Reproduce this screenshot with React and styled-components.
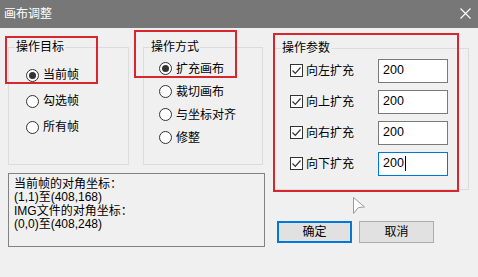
import React from "react";
import styled, { createGlobalStyle } from "styled-components";

const Global = createGlobalStyle`
  html, body { margin: 0; padding: 0; background: #f0f0f0; }
  * { box-sizing: border-box; }
`;

const FONT = `"Liberation Sans", "Noto Sans CJK SC", sans-serif`;

const Window = styled.div`
  position: relative;
  width: 478px;
  height: 277px;
  overflow: hidden;
  background: #f0f0f0;
  font-family: ${FONT};
  font-size: 12px;
  color: #000;
`;

const TitleBar = styled.div`
  height: 28px;
  background: #777777;
  color: #fff;
  display: flex;
  align-items: center;
  justify-content: space-between;
  padding: 0 7px 1px 4px;
  font-size: 12px;
  line-height: 14px;
`;

const Body = styled.div`
  display: grid;
  grid-template-columns: 257px 195px;
  column-gap: 9px;
  padding: 12px 9px 0 8px;
`;

const LeftCol = styled.div`
  display: flex;
  flex-direction: column;
`;

const RightCol = styled.div`
  display: flex;
  flex-direction: column;
`;

const GroupRow = styled.div`
  display: flex;
  gap: 14px;
`;

const Group = styled.fieldset`
  margin: ${(p) => p.$top || 0}px 0 0 0;
  padding: 0;
  border: 1px solid #dcdcdc;
  min-width: 0;
  width: ${(p) => p.$w}px;
  height: ${(p) => p.$h}px;
`;

const Legend = styled.legend`
  margin-left: 6px;
  padding: 0 1px;
  font-size: 12px;
  line-height: 14px;
`;

const OptionList = styled.div`
  display: flex;
  flex-direction: column;
  padding: ${(p) => p.$pt}px 0 0 ${(p) => p.$pl}px;
`;

const OptionRow = styled.label`
  display: flex;
  align-items: center;
  height: ${(p) => p.$h}px;
  gap: ${(p) => p.$gap ?? 4}px;
  line-height: 14px;
`;

const RadioCircle = styled.span`
  width: 13px;
  height: 13px;
  border-radius: 50%;
  border: 1px solid #333;
  background: #fff;
  display: flex;
  align-items: center;
  justify-content: center;
  flex: none;
  &::after {
    content: "";
    width: 7px;
    height: 7px;
    border-radius: 50%;
    background: ${(p) => (p.$on ? "#333" : "transparent")};
  }
`;

const CheckBox = styled.span`
  width: 13px;
  height: 13px;
  border: 1px solid #333;
  background: #fff;
  display: flex;
  align-items: center;
  justify-content: center;
  flex: none;
`;

const ParamLabel = styled.span`
  display: flex;
  align-items: center;
  gap: 3px;
  width: 88px;
`;

const NumInput = styled.div`
  width: 70px;
  height: 24px;
  border: 1px solid ${(p) => (p.$focus ? "#0078d7" : "#7a7a7a")};
  background: #fff;
  padding: 3px 0 0 4px;
  font-size: 12.5px;
  line-height: 15px;
  display: flex;
  align-items: flex-start;
`;

const Caret = styled.span`
  display: inline-block;
  width: 1px;
  height: 15px;
  background: #000;
  margin-left: 1px;
`;

const InfoBox = styled.div`
  margin-top: 8px;
  height: 74px;
  border: 1px solid #828282;
  padding: 4px 5px;
  font-size: 12px;
  line-height: 13.3px;
`;

const ButtonRow = styled.div`
  display: flex;
  gap: 7px;
  margin: 31px 0 0 3px;
`;

const Button = styled.div`
  width: 75px;
  height: 22px;
  display: flex;
  align-items: center;
  justify-content: center;
  background: #e1e1e1;
  border: ${(p) => (p.$primary ? "2px solid #0078d7" : "1px solid #adadad")};
  font-size: 12px;
  line-height: 14px;
`;

const Annotation = styled.div`
  position: absolute;
  left: ${(p) => p.$x}px;
  top: ${(p) => p.$y}px;
  width: ${(p) => p.$w}px;
  height: ${(p) => p.$h}px;
  border: 2px solid #d8262f;
  pointer-events: none;
`;

const Cursor = styled.svg`
  position: absolute;
  left: 352px;
  top: 197px;
`;

const Check = () => (
  <svg width="11" height="11" viewBox="0 0 11 11">
    <path d="M1.5 5.5 L4.3 8.3 L9.5 2.5" fill="none" stroke="#333" strokeWidth="1.2" />
  </svg>
);

const targets = [
  { label: "当前帧", on: true },
  { label: "勾选帧" },
  { label: "所有帧" },
];

const modes = [
  { label: "扩充画布", on: true },
  { label: "裁切画布" },
  { label: "与坐标对齐" },
  { label: "修整" },
];

const params = [
  { label: "向左扩充", value: "200" },
  { label: "向上扩充", value: "200" },
  { label: "向右扩充", value: "200" },
  { label: "向下扩充", value: "200", focus: true },
];

export default function App() {
  return (
    <>
      <Global />
      <Window>
        <TitleBar>
          <span>画布调整</span>
          <svg width="11" height="11" viewBox="0 0 11 11">
            <path d="M0.5 0.5 L10.5 10.5 M10.5 0.5 L0.5 10.5" stroke="#fff" strokeWidth="1.1" />
          </svg>
        </TitleBar>
        <Body>
          <LeftCol>
            <GroupRow>
              <Group $w={121} $h={125}>
                <Legend>操作目标</Legend>
                <OptionList $pt={8} $pl={17}>
                  {targets.map((t) => (
                    <OptionRow key={t.label} $h={26}>
                      <RadioCircle $on={t.on} />
                      {t.label}
                    </OptionRow>
                  ))}
                </OptionList>
              </Group>
              <Group $w={120} $h={125}>
                <Legend>操作方式</Legend>
                <OptionList $pt={3} $pl={15}>
                  {modes.map((m) => (
                    <OptionRow key={m.label} $h={23}>
                      <RadioCircle $on={m.on} />
                      {m.label}
                    </OptionRow>
                  ))}
                </OptionList>
              </Group>
            </GroupRow>
            <InfoBox>
              当前帧的对角坐标：
              <br />
              (1,1)至(408,168)
              <br />
              IMG文件的对角坐标：
              <br />
              (0,0)至(408,248)
            </InfoBox>
          </LeftCol>
          <RightCol>
            <Group $w={195} $h={149} $top={1}>
              <Legend>操作参数</Legend>
              <OptionList $pt={0} $pl={15}>
                {params.map((p) => (
                  <OptionRow key={p.label} $h={31} $gap={0}>
                    <ParamLabel>
                      <CheckBox>
                        <Check />
                      </CheckBox>
                      {p.label}
                    </ParamLabel>
                    <NumInput $focus={p.focus}>
                      {p.value}
                      {p.focus && <Caret />}
                    </NumInput>
                  </OptionRow>
                ))}
              </OptionList>
            </Group>
            <ButtonRow>
              <Button $primary>确定</Button>
              <Button>取消</Button>
            </ButtonRow>
          </RightCol>
        </Body>
        <Annotation $x={5} $y={36} $w={93} $h={48} />
        <Annotation $x={134} $y={30} $w={103} $h={48} />
        <Annotation $x={273} $y={33} $w={186} $h={159} />
        <Cursor width="14" height="18" viewBox="0 0 14 18">
          <path d="M1.5 0.5 L12.5 10 L6.5 10.5 L1.5 16.5 Z" fill="#fff" stroke="#9a9a9a" strokeWidth="1" />
        </Cursor>
      </Window>
    </>
  );
}
